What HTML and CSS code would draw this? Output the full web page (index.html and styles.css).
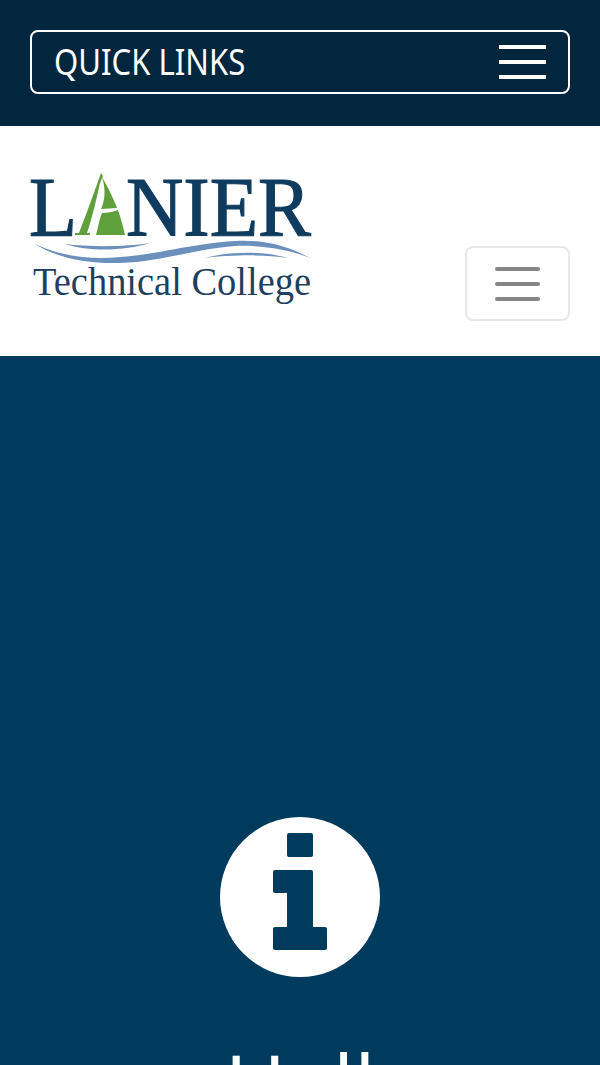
FILE: index.html
```html
<!DOCTYPE html>
<html lang="en">
<head>
<meta charset="utf-8">
<title>Lanier Technical College</title>
<link rel="stylesheet" href="styles.css">
</head>
<body>
<header class="quick-bar">
  <button class="quick-toggle">
    <span class="quick-label">QUICK LINKS</span>
    <span class="quick-icon"><i></i><i></i><i></i></span>
  </button>
</header>
<nav class="site-nav">
  <svg class="logo" viewBox="0 0 284 134" width="284" height="134" role="img" aria-label="Lanier Technical College">
    <text class="logo-big" x="-1" y="63" textLength="48" lengthAdjust="spacingAndGlyphs">L</text>
    <path class="sail" d="M71 0 L 73 3 L 70 10 C 66 28, 62 45, 57 60 L 60 60 L 60 62 L 45 62 L 45 60 L 49 60 C 56 42, 64 20, 71 0 Z"/>
    <path class="sail" d="M72 4 C 78 14, 83 25, 87 35 L 71 36 C 75 28, 76 16, 72 4 Z"/>
    <path class="sail" d="M88 37 C 91 45, 93 54, 95 62 L 66 62 C 68 55, 69 47, 72 40 C 77 40, 83 39, 88 37 Z"/>
    <text class="logo-big" x="96" y="63" textLength="185" lengthAdjust="spacingAndGlyphs">NIER</text>
    <path class="wave" d="M5 71 C 30 83, 60 87, 90 84 C 130 81, 160 71, 205 68 C 235 66, 260 74, 280 85 C 258 76, 232 72, 205 73 C 165 76, 130 89, 90 90 C 55 91, 25 84, 5 71 Z"/>
    <path class="wave" d="M35 71 C 60 74, 95 74, 120 70 C 95 78, 60 79, 35 71 Z"/>
    <path class="wave" d="M175 85 C 200 78, 235 78, 258 85 C 235 81, 200 82, 175 85 Z"/>
    <text class="logo-small" x="3" y="122" textLength="278" lengthAdjust="spacingAndGlyphs">Technical College</text>
  </svg>
  <button class="nav-toggle"><span class="nav-icon"><i></i><i></i><i></i></span></button>
</nav>
<main class="hero">
  <svg class="info" viewBox="0 0 160 160" width="160" height="160" aria-hidden="true">
    <path fill-rule="evenodd" d="M80 0a80 80 0 1 0 0 160A80 80 0 1 0 80 0Z M69 16h22a2 2 0 0 1 2 2v20a2 2 0 0 1-2 2H69a2 2 0 0 1-2-2V18a2 2 0 0 1 2-2Z M55 53h36a2 2 0 0 1 2 2v55h12a2 2 0 0 1 2 2v19a2 2 0 0 1-2 2H55a2 2 0 0 1-2-2v-19a2 2 0 0 1 2-2h12V76H55a2 2 0 0 1-2-2V55a2 2 0 0 1 2-2Z"/>
  </svg>
  <h1 class="hero-title">Hall</h1>
</main>
</body>
</html>
```
FILE: styles.css
```css
* { box-sizing: border-box; }
html, body { margin: 0; height: 1065px; overflow: hidden; }
body { font-family: "Open Sans", "Liberation Sans", sans-serif; background: #003a5c; }
.quick-bar { height: 126px; background: #03263f; padding: 30px; }
.quick-toggle {
  width: 100%; height: 64px; padding: 0 22px;
  display: flex; align-items: center; justify-content: space-between;
  background: transparent; border: 2px solid #fff; border-radius: 8px; color: #fff;
}
.quick-label { font-family: "Noto Sans", sans-serif; font-size: 37px; line-height: 44px; padding-bottom: 3px; transform: scaleX(.84); transform-origin: left; white-space: nowrap; }
.quick-icon { display: flex; flex-direction: column; gap: 11px; width: 47px; }
.quick-icon i { display: block; height: 4px; background: #fff; }
.site-nav { height: 230px; background: #fff; padding: 47px 30px 0; display: flex; justify-content: space-between; align-items: flex-start; }
.logo { display: block; flex: none; overflow: visible; }
.logo-big { font-family: "Liberation Serif", serif; font-size: 85px; fill: #0f3b5f; stroke: #0f3b5f; stroke-width: 1.2px; }
.logo-small { font-family: "Liberation Serif", serif; font-size: 39.5px; fill: #1f3f5f; }
.sail { fill: #5f9f3c; }
.wave { fill: #6c90bd; }
.nav-toggle { width: 105px; height: 75px; margin-top: 73px; background: #fff; border: 2px solid #e8e8e8; border-radius: 8px; padding: 0; display: flex; align-items: center; justify-content: center; }
.nav-icon { display: flex; flex-direction: column; gap: 11px; width: 45px; }
.nav-icon i { display: block; height: 4px; border-radius: 2px; background: #858585; }
.hero { height: 709px; overflow: hidden; padding-top: 461px; display: flex; flex-direction: column; align-items: center; fill: #fff; color: #fff; }
.info { display: block; flex: none; }
.hero-title { margin: 57px 0 0; font-family: "Open Sans", sans-serif; font-size: 84px; line-height: 1.2; font-weight: 400; }
```
